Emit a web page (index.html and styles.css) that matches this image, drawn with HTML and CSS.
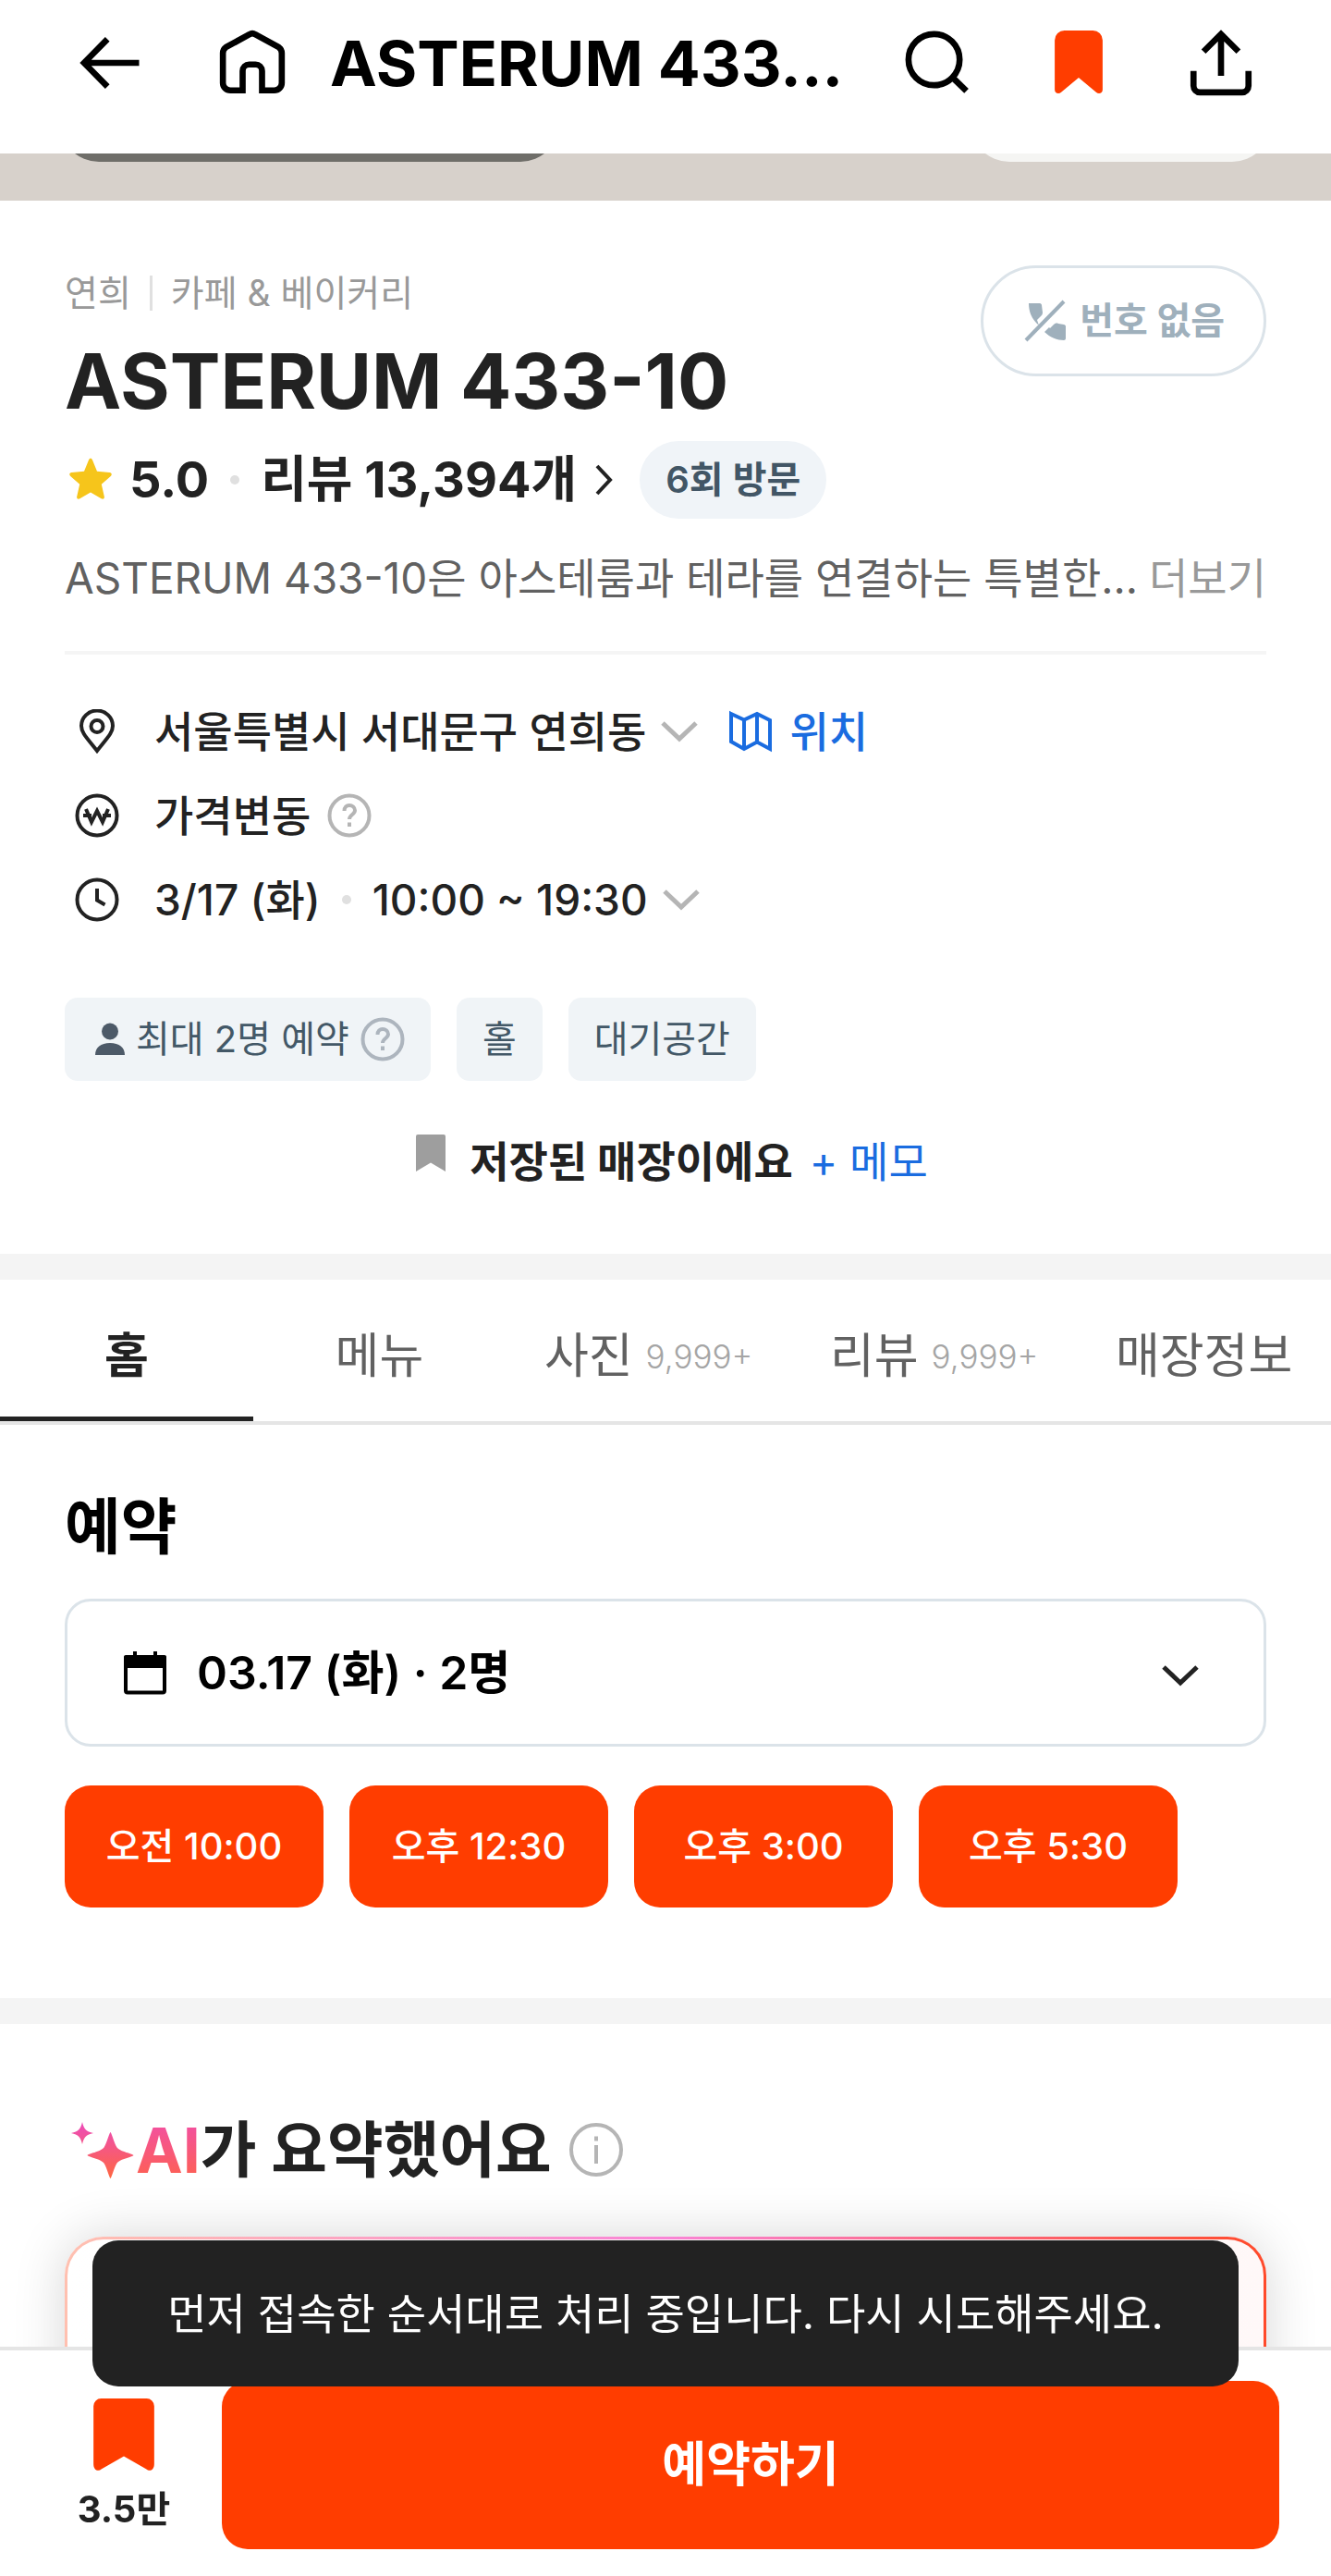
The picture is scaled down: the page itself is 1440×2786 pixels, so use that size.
FILE: index.html
```html
<!DOCTYPE html>
<html lang="ko">
<head>
    <meta charset="UTF-8">
    <meta name="viewport" content="width=device-width, initial-scale=1.0">
    <title>ASTERUM 433-10</title>
    <link rel="stylesheet" href="styles.css">
</head>
<body>

    <header class="topbar">
        <button class="icon-btn" aria-label="뒤로">
            <svg class="icon" viewBox="0 0 24 24"><path d="M11.2 4.7 4 12l7.2 7.3M4 12h17"/></svg>
        </button>
        <button class="icon-btn" aria-label="홈">
            <svg class="icon" viewBox="0 0 24 24"><path d="M9 20.5H5.2a2.3 2.3 0 0 1-2.3-2.3V9c0-.8.3-1.4.9-1.8l7.3-4c.6-.4 1.2-.4 1.8 0l7.3 4c.6.4.9 1 .9 1.8v9.2a2.3 2.3 0 0 1-2.3 2.3H15v-6a2 2 0 0 0-2-2h-2a2 2 0 0 0-2 2z"/></svg>
        </button>
        <div class="topbar-title">ASTERUM 433...</div>
        <button class="icon-btn" aria-label="검색">
            <svg class="icon" viewBox="0 0 24 24"><circle cx="11.3" cy="11" r="7.9"/><path d="m17 16.5 4.3 4.2"/></svg>
        </button>
        <button class="icon-btn saved" aria-label="저장">
            <svg class="icon" viewBox="0 0 24 24"><path d="M7.6 2h8.800a3 3 0 0 1 3 3v15.300c0 1.100-1.200 1.500-2 .8L12 16.600l-5.400 4.500c-.8.7-2 .3-2-.8V5a3 3 0 0 1 3-3z"/></svg>
        </button>
        <button class="icon-btn" aria-label="공유">
            <svg class="icon" viewBox="0 0 24 24"><path d="M12 16V3.200M6.600 8.500 12 3.100l5.400 5.400M3.500 14.500v4.600a2 2 0 0 0 2 2h13a2 2 0 0 0 2-2v-4.600"/></svg>
        </button>
    </header>

    <div class="hero">
        <span class="hero-pill dark"></span>
        <span class="hero-pill light"></span>
    </div>

    <main>
        <!-- 매장 정보 -->
        <section class="info">
            <div class="info-head">
                <div>
                    <div class="category"><span>연희</span><span class="bar"></span><span>카페 &amp; 베이커리</span></div>
                    <h1>ASTERUM 433-10</h1>
                </div>
                <button class="phone">
                    <svg viewBox="0 0 48 48"><path d="M7 5h12c1 0 2 1 2 2l1 8c0 2-1 3-2 4l-4 4 2 6C10 22 7 14 7 5zM24 36l5-5 1 1 4-4c1-1 3-2 5-1l6 1c1 0 2 1 2 2v13c0 1-1 2-2 2-7 0-15-3-21-9z"/><path class="slash" d="M4 45 45 3"/></svg>
                    번호 없음
                </button>
            </div>

            <div class="rating">
                <svg class="star" viewBox="0 0 48 48"><path d="M22 2.500c1-2.200 3-2.200 4 0l5 12.300 13.500 1.200c2.300.2 3 2.300 1.300 3.900l-10 8.800 3 13.300c.5 2.300-1.200 3.500-3.200 2.300L24 37.500l-11.600 6.800c-2 1.200-3.700 0-3.200-2.300l3-13.300-10-8.800C.5 18.300 1.200 16.200 3.500 16L17 14.800z"/></svg>
                <span>5.0</span>
                <span class="dot"></span>
                <a class="review" href="#review">리뷰 13,394개
                    <svg viewBox="0 0 20 36"><path d="m2 3 14 15L2 33"/></svg>
                </a>
                <span class="visit">6회 방문</span>
            </div>

            <div class="desc">
                <p>ASTERUM 433-10은 아스테룸과 테라를 연결하는 특별한...</p>
                <button class="more">더보기</button>
            </div>

            <ul class="details">
                <li>
                    <svg class="detail-icon" viewBox="0 0 48 48"><path d="M24 45C14 32 7 26 7 18a17 16.500 0 0 1 34 0c0 8-7 14-17 27z"/><circle cx="24" cy="18.500" r="6.500"/></svg>
                    <span>서울특별시 서대문구 연희동</span>
                    <svg class="chevron" viewBox="0 0 40 24"><path d="m2 3 18 17L38 3"/></svg>
                    <a class="map" href="#map">
                        <svg viewBox="0 0 48 48"><path d="M3 5 17 11.500 31 5l14 7v31l-14-7.500L17 43 3 35zM17 11v32M31 5v31"/></svg>
                        위치
                    </a>
                </li>
                <li>
                    <svg class="detail-icon" viewBox="0 0 48 48"><circle cx="24" cy="24" r="21.500"/><path d="m12 17 6 14 6-12 6 12 6-14M9 24h9M30 24h9"/></svg>
                    <span>가격변동</span>
                    <button class="help" aria-label="가격 안내"><svg viewBox="0 0 48 48"><circle cx="24" cy="24" r="21.500"/><path d="M18.500 19c0-4 2.500-6 5.500-6s6 2 6 5.500c0 4.500-6 4.500-6 9.500M24 31.500v4.500"/></svg></button>
                </li>
                <li>
                    <svg class="detail-icon" viewBox="0 0 48 48"><circle cx="24" cy="24" r="21.500"/><path d="M24 12v12.500l8.500 5"/></svg>
                    <span>3/17 (화)</span>
                    <span class="dot"></span>
                    <span>10:00 ~ 19:30</span>
                    <svg class="chevron" viewBox="0 0 40 24"><path d="m2 3 18 17L38 3"/></svg>
                </li>
            </ul>

            <div class="tags">
                <span class="tag">
                    <svg class="person" viewBox="0 0 36 36"><circle cx="18" cy="9.500" r="9"/><path d="M2 35c0-8 6-13 16-13s16 5 16 13z"/></svg>
                    최대 2명 예약
                    <button class="help" aria-label="예약 인원 안내"><svg viewBox="0 0 48 48"><circle cx="24" cy="24" r="21.500"/><path d="M18.500 19c0-4 2.500-6 5.500-6s6 2 6 5.500c0 4.500-6 4.500-6 9.500M24 31.500v4.500"/></svg></button>
                </span>
                <span class="tag">홀</span>
                <span class="tag">대기공간</span>
            </div>

            <div class="memo">
                <svg viewBox="0 0 32 40"><path d="M2 0h28a2 2 0 0 1 2 2v38L16 30.500 0 40V2a2 2 0 0 1 2-2z"/></svg>
                <strong>저장된 매장이에요</strong>
                <a href="#memo">+ 메모</a>
            </div>
        </section>

        <nav class="tabs">
            <a class="tab active" href="#home">홈</a>
            <a class="tab" href="#menu">메뉴</a>
            <a class="tab" href="#photo">사진 <small>9,999+</small></a>
            <a class="tab" href="#review">리뷰 <small>9,999+</small></a>
            <a class="tab" href="#shop">매장정보</a>
        </nav>

        <!-- 예약 -->
        <section class="booking">
            <h2>예약</h2>
            <button class="date-select">
                <svg class="calendar" viewBox="0 0 48 48"><path d="M3 8.500h42v35a2 2 0 0 1-2 2H5a2 2 0 0 1-2-2z"/><path class="fill" d="M1 7a2 2 0 0 1 2-2h8V1h4v4h18V1h4v4h8a2 2 0 0 1 2 2v12H1z"/></svg>
                <span>03.17 (화) · 2명</span>
                <svg class="chevron" viewBox="0 0 40 24"><path d="m2 3 18 17L38 3"/></svg>
            </button>
            <div class="slots">
                <button class="slot">오전 10:00</button>
                <button class="slot">오후 12:30</button>
                <button class="slot">오후 3:00</button>
                <button class="slot">오후 5:30</button>
            </div>
        </section>

        <!-- AI 요약 -->
        <section class="summary">
            <h2>
                <svg class="sparkle" viewBox="0 0 68 62">
                    <defs>
                        <linearGradient id="spark" x1="0" y1="0" x2="0" y2="62" gradientUnits="userSpaceOnUse">
                            <stop offset="0" stop-color="#ec4bbd"/>
                            <stop offset="1" stop-color="#ff6640"/>
                        </linearGradient>
                    </defs>
                    <path fill="url(#spark)" d="M12 1c2 8 4 10 12 12-8 2-10 4-12 12-2-8-4-10-12-12 8-2 10-4 12-12zM42.500 12c1 0 4 12 7 16.500 3 4.500 18 7 18 8.500s-15 4-18 8.500c-3 4.500-6 16.500-7 16.500s-4-12-7-16.500c-3-4.500-18-7-18-8.500s15-4 18-8.500c3-4.500 6-16.500 7-16.500z"/>
                </svg>
                <span class="ai">AI</span>가 요약했어요
                <button class="help info-btn" aria-label="AI 요약 안내"><svg viewBox="0 0 60 60"><circle cx="30" cy="30" r="27"/><path d="M30 25v20M30 15.500v5"/></svg></button>
            </h2>
            <div class="summary-card"></div>
        </section>
    </main>

    <footer class="bottombar">
        <div class="toast" role="status">먼저 접속한 순서대로 처리 중입니다. 다시 시도해주세요.</div>
        <button class="save">
            <svg viewBox="0 0 64 76"><path d="M8 0h48a8 8 0 0 1 8 8v61c0 6-4 9-9 5L32 61 9 74c-5 4-9 1-9-5V8a8 8 0 0 1 8-8z"/></svg>
            3.5만
        </button>
        <button class="reserve">예약하기</button>
    </footer>

</body>
</html>
```
FILE: styles.css
```css
* {
    box-sizing: border-box;
}

body {
    margin: 0;
    font-family: Inter, "Noto Sans CJK KR", sans-serif;
    font-size: 46px;
    line-height: 64px;
    color: #222;
    background: #fff;
}

h1, h2, p, ul {
    margin: 0;
    padding: 0;
}

button {
    padding: 0;
    border: none;
    background: none;
    font: inherit;
    color: inherit;
    cursor: pointer;
}

a {
    color: inherit;
    text-decoration: none;
}

svg {
    display: block;
    flex: none;
    fill: none;
    stroke: currentColor;
    stroke-width: 4;
}

/* 상단바 */
.topbar {
    position: sticky;
    top: 0;
    z-index: 10;
    display: flex;
    align-items: center;
    gap: 70px;
    padding: 26px 77px 56px;
    background: #fff;
    color: #000;
}

.icon {
    width: 84px;
    height: 84px;
    stroke-width: 1.9;
}

.saved svg {
    fill: #ff3d00;
    stroke: none;
}

.topbar-title {
    flex: 1;
    min-width: 0;
    margin-left: -28px;
    font-size: 68px;
    font-weight: 700;
    line-height: 84px;
    white-space: nowrap;
}

.hero {
    display: flex;
    justify-content: space-between;
    align-items: flex-end;
    height: 51px;
    padding: 0 65px 42px;
    overflow: hidden;
    background: #d7d1cb;
}

.hero-pill {
    height: 84px;
    border-radius: 42px;
}

.hero-pill.dark {
    width: 540px;
    background: #6f6e69;
}

.hero-pill.light {
    width: 325px;
    background: #f5f5f3;
}

/* 매장 정보 */
.info {
    padding: 70px 70px 68px;
}

.info-head {
    display: flex;
    justify-content: space-between;
    align-items: flex-start;
}

.category {
    display: flex;
    align-items: center;
    gap: 20px;
    font-size: 39px;
    line-height: 60px;
    color: #999;
}

.category .bar {
    width: 3px;
    height: 38px;
    background: #e0e0e0;
}

h1 {
    margin-top: 16px;
    font-size: 82px;
    font-weight: 700;
    line-height: 100px;
}

.phone {
    display: flex;
    align-items: center;
    gap: 14px;
    height: 120px;
    padding: 0 42px;
    border: 3px solid #dbe3e9;
    border-radius: 60px;
    font-size: 40px;
    font-weight: 700;
    color: #9fb0bc;
}

.phone svg {
    width: 48px;
    height: 48px;
    fill: currentColor;
    stroke: none;
}

.phone .slash {
    stroke: currentColor;
    stroke-width: 4;
}

.rating {
    display: flex;
    align-items: center;
    height: 84px;
    margin-top: 14px;
    font-size: 54px;
    font-weight: 700;
}

.star {
    width: 48px;
    height: 48px;
    margin: 0 18px 0 4px;
    fill: #f6c51b;
    stroke: none;
}

.dot {
    width: 10px;
    height: 10px;
    margin: 0 23px;
    border-radius: 50%;
    background: #e0e0e0;
}

.review {
    display: flex;
    align-items: center;
    gap: 20px;
}

.review svg {
    width: 20px;
    height: 36px;
}

.visit {
    height: 84px;
    margin-left: 28px;
    padding: 0 28px;
    border-radius: 42px;
    background: #f0f4f8;
    font-size: 40px;
    font-weight: 600;
    line-height: 84px;
    color: #425666;
}

.desc {
    display: flex;
    justify-content: space-between;
    margin-top: 32px;
    padding-bottom: 47px;
    border-bottom: 4px solid #f5f5f5;
    color: #616161;
    white-space: nowrap;
}

.more {
    color: #999;
}

.details {
    display: grid;
    gap: 27px;
    margin-top: 51px;
    list-style: none;
    font-weight: 500;
}

.details li {
    display: flex;
    align-items: center;
}

.detail-icon {
    width: 48px;
    height: 48px;
    margin: 0 38px 0 11px;
}

.chevron {
    width: 40px;
    height: 24px;
    margin-left: 16px;
    color: #b5b5b5;
    stroke-width: 5;
}

.map {
    display: flex;
    align-items: center;
    gap: 18px;
    margin-left: 33px;
    color: #1a6ce0;
}

.map svg {
    width: 48px;
    height: 48px;
}

.help {
    margin-left: 18px;
    color: #b5b5b5;
}

.help svg {
    width: 48px;
    height: 48px;
}

.tags {
    display: flex;
    gap: 28px;
    margin-top: 74px;
}

.tag {
    display: flex;
    align-items: center;
    height: 90px;
    padding: 0 28px;
    border-radius: 14px;
    background: #f0f4f7;
    font-size: 40px;
    color: #435867;
}

.tag .help {
    margin-left: 12px;
    color: #adb5be;
}

.person {
    width: 36px;
    height: 36px;
    margin: 0 10px 0 3px;
    fill: #4d5a68;
    stroke: none;
}

.memo {
    display: flex;
    justify-content: center;
    gap: 18px;
    margin-top: 55px;
    padding-left: 14px;
}

.memo svg {
    width: 32px;
    height: 40px;
    margin: 3px 8px 0 0;
    fill: #9e9e9e;
    stroke: none;
}

.memo a {
    color: #1a6ce0;
}

/* 탭 */
.tabs {
    display: flex;
    border-top: 28px solid #f4f4f4;
    border-bottom: 4px solid #e5e5e5;
}

.tab {
    display: flex;
    flex: 1 1 auto;
    justify-content: center;
    align-items: center;
    gap: 14px;
    height: 153px;
    padding: 18px 40px 0;
    border-bottom: 5px solid transparent;
    font-size: 52px;
    color: #616161;
    white-space: nowrap;
}

.tab:nth-child(-n+2) {
    flex: 0 1 19%;
}

.tab small {
    font-size: 35px;
    font-weight: 300;
    color: #a5a5a5;
}

.tab.active {
    border-color: #222;
    font-weight: 700;
    color: #222;
}

/* 예약 */
.booking {
    padding: 70px 70px 98px;
    border-bottom: 28px solid #f4f4f4;
}

h2 {
    font-size: 66px;
    font-weight: 700;
    line-height: 80px;
}

.booking h2 {
    color: #000;
}

.date-select {
    display: flex;
    align-items: center;
    width: 100%;
    height: 160px;
    margin-top: 38px;
    padding: 0 70px 0 60px;
    border: 3px solid #dbe3e9;
    border-radius: 28px;
    font-size: 50px;
    font-weight: 600;
    color: #000;
}

.calendar {
    width: 48px;
    height: 48px;
    margin-right: 32px;
}

.calendar .fill {
    fill: currentColor;
    stroke: none;
}

.date-select .chevron {
    margin: 6px 0 0 auto;
    color: #222;
}

.slots {
    display: flex;
    gap: 28px;
    margin-top: 42px;
}

.slot {
    width: 280px;
    height: 132px;
    border-radius: 28px;
    background: #ff3d00;
    font-size: 40px;
    font-weight: 500;
    color: #fff;
}

/* AI 요약 */
.summary {
    padding: 96px 70px 0;
}

.summary h2 {
    display: flex;
    align-items: center;
}

.sparkle {
    width: 68px;
    height: 62px;
    margin: 0 2px 0 7px;
    stroke: none;
}

.ai {
    font-size: 68px;
    background: linear-gradient(#f04db0, #ff6347);
    background-clip: text;
    -webkit-background-clip: text;
    color: transparent;
}

.info-btn svg {
    width: 60px;
    height: 60px;
}

.summary-card {
    height: 200px;
    margin-top: 54px;
    border: 3px solid transparent;
    border-radius: 42px;
    background:
        linear-gradient(90deg, #fff, #fff8f8) padding-box,
        linear-gradient(90deg, #ffc0b0, #f985d6 50%, #ff4a2a) border-box;
    box-shadow: 0 0 56px rgba(0, 0, 0, 0.16);
}

/* 하단 예약바 */
.bottombar {
    position: fixed;
    left: 0;
    right: 0;
    bottom: 0;
    display: flex;
    align-items: center;
    padding: 33px 56px 29px 0;
    border-top: 4px solid #e5e5e5;
    background: #fff;
}

.save {
    display: flex;
    flex: none;
    flex-direction: column;
    align-items: center;
    gap: 10px;
    width: 240px;
    padding: 8px 0 0 28px;
    font-size: 40px;
    font-weight: 700;
}

.save svg {
    width: 66px;
    height: 78px;
    fill: #ff3d00;
    stroke: none;
}

.reserve {
    flex: 1;
    height: 182px;
    border-radius: 28px;
    background: #ff3d00;
    font-size: 52px;
    font-weight: 700;
    color: #fff;
}

.toast {
    position: absolute;
    left: 100px;
    right: 100px;
    bottom: 205px;
    padding: 47px 0;
    border-radius: 28px;
    background: #222;
    color: #fff;
    text-align: center;
}
```
